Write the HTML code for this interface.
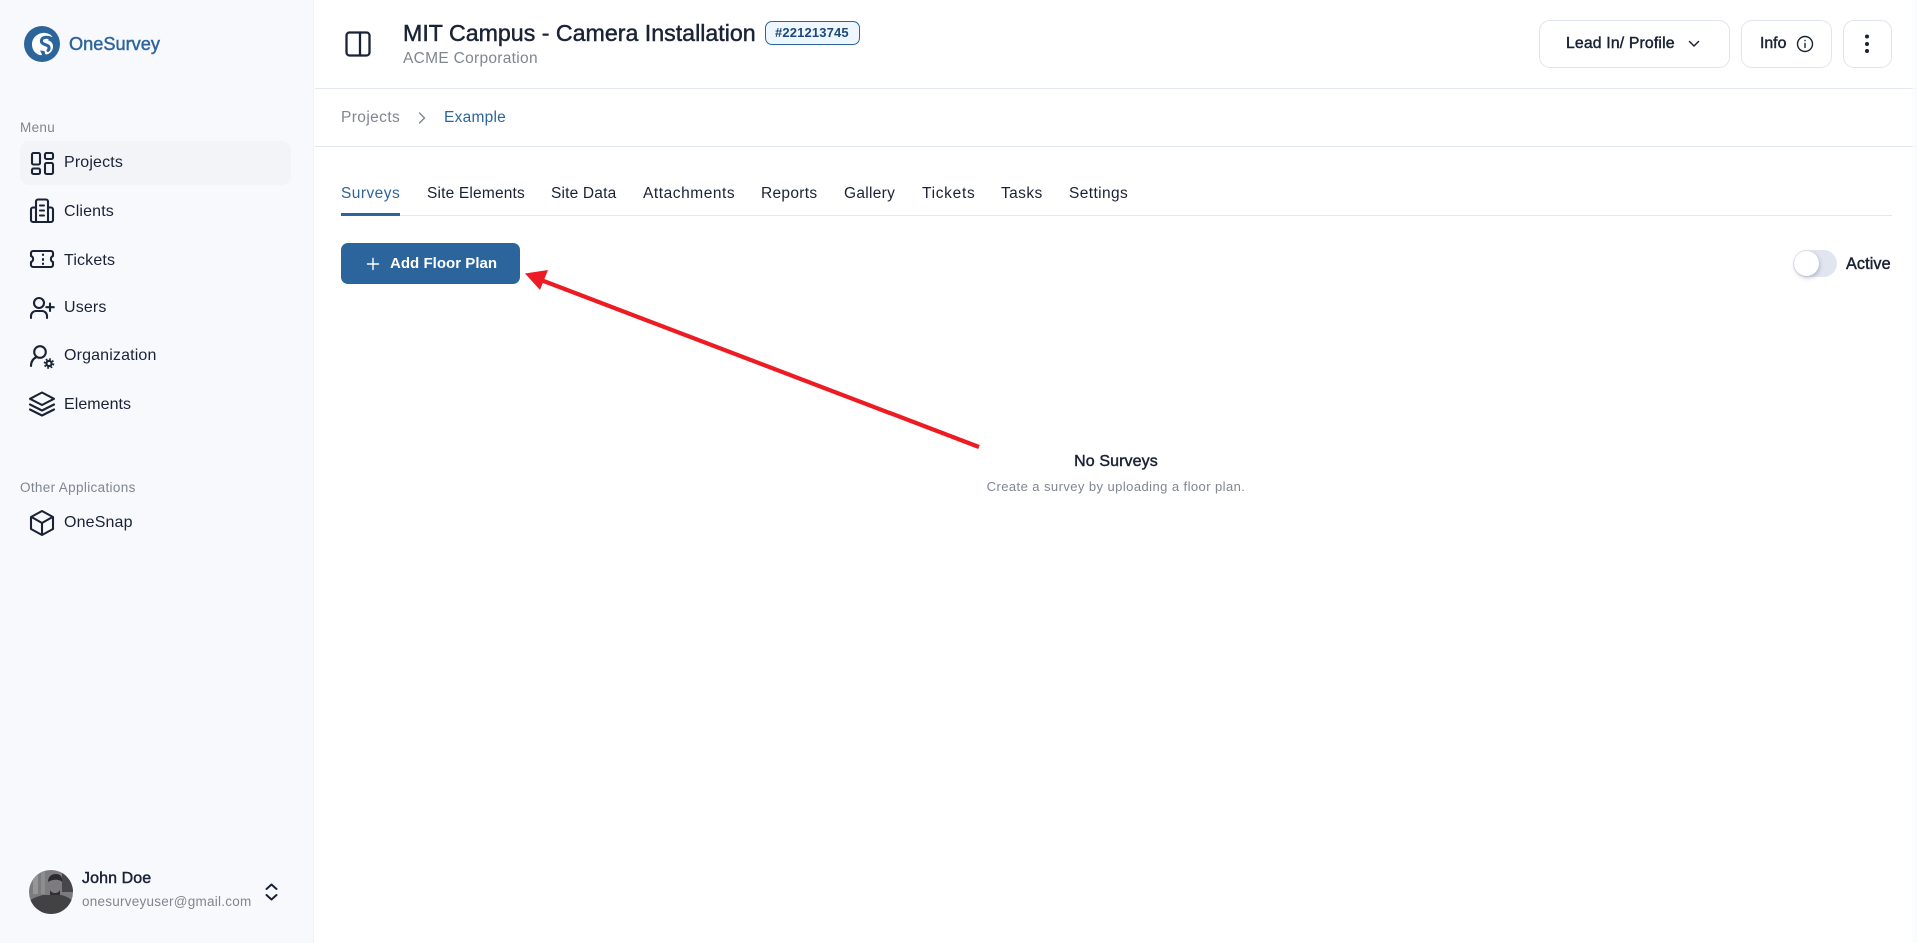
<!DOCTYPE html>
<html lang="en">
<head>
<meta charset="utf-8">
<title>OneSurvey - MIT Campus</title>
<style>
*{box-sizing:border-box;margin:0;padding:0}
html,body{width:1917px;height:943px;overflow:hidden;background:#fff;font-family:"Liberation Sans",sans-serif;color:#1a2236}
.t{position:absolute;white-space:nowrap;line-height:20px;height:20px}
.side{position:absolute;left:0;top:0;width:314px;height:943px;background:#f8f9fd;border-right:1px solid #f0f2f7}
.active{position:absolute;left:20px;top:141px;width:271px;height:44px;border-radius:9px;background:#f3f4f8}
.nav{font-size:16px;letter-spacing:.15px;left:64px}
.label{font-size:13.5px;color:#7f8690;left:20px;letter-spacing:.34px}
.med{-webkit-text-stroke:.45px currentColor}
.line{position:absolute;background:#e3e7ef;height:1px}
.btn{position:absolute;top:20px;height:48px;border:1px solid #dfe4f0;border-radius:11px;background:#fff}
.tab{font-size:15.5px;top:184px;letter-spacing:.18px;color:#1a2236}
svg{position:absolute;overflow:visible}
</style>
</head>
<body>
<aside class="side"></aside>
<div class="active"></div>

<svg style="left:0;top:0" width="314" height="943" viewBox="0 0 314 943" fill="none" stroke="#1a2236" stroke-width="2.1" stroke-linecap="round" stroke-linejoin="round">
  <circle cx="42" cy="44" r="18" fill="#2c659c" stroke="none"/>
  <path d="M47 33.2C39 31.5 32 37 32 44.5c0 6 4 10 9 10.8l3-1.6 3 .8c3-1 5.5-3.5 6-7 .5-4-2-6.500-5.500-7.500l5-3C51.500 35 49.500 33.800 47 33.200Z" fill="#fff" stroke="none"/>
  <path d="M52 38.500C47 36.500 42.500 37 41.500 40c-1 3.500 3.500 4.500 6 5.500 2 1 2 3.500 .5 5" stroke="#2c659c" stroke-width="3"/>
  <path d="M40 50.500l2.500 5h3l-1-4.500z" fill="#2c659c" stroke="none"/>

  <rect x="32" y="153" width="8" height="11.500" rx="1.500"/><rect x="45" y="153" width="8" height="6" rx="1.500"/><rect x="45" y="163" width="8" height="11" rx="1.500"/><rect x="32" y="168.500" width="8" height="5.500" rx="1.500"/>

  <path d="M36 222V201.500a2 2 0 0 1 2-2h8a2 2 0 0 1 2 2v20.500M36 207.500h-3a2 2 0 0 0-2 2v10.500a2 2 0 0 0 2 2h18a2 2 0 0 0 2-2v-10.500a2 2 0 0 0-2-2h-3M40 205.500h4M40 210.500h4M40 215.500h4"/>

  <path d="M33 251h18a2 2 0 0 1 2 2v3a3.200 3.200 0 0 0 0 6v3a2 2 0 0 1-2 2H33a2 2 0 0 1-2-2v-3a3.200 3.200 0 0 0 0-6v-3a2 2 0 0 1 2-2ZM43 254.500v.5M43 259v1M43 263.500v.5"/>

  <circle cx="39" cy="303" r="5"/><path d="M31 318v-2a5 5 0 0 1 5-5h6a5 5 0 0 1 5 5v2M50 303.500v7.500M46.300 307.200h7.500"/>

  <circle cx="40" cy="352" r="5.800"/><path d="M31 366c0-4.500 2.500-7.500 5.500-9"/>
  <circle cx="49" cy="363.500" r="2.600" stroke-width="2.200"/><circle cx="49" cy="363.500" r="4.500" stroke-width="1.600" stroke-dasharray="1.800 1.730" stroke-linecap="butt"/>

  <path d="M42 392.500l12 6.300-12 6.200-12-6.200zM30 404.500l12 6 12-6M30 409.500l12 6 12-6"/>

  <path d="M42 511l11 6v12l-11 6-11-6v-12zM31.500 517l10.500 6 10.500-6M42 523v12"/>

  <path d="M266.500 889l5-4.500 5 4.500M266.500 895l5 4.500 5-4.500" stroke-width="2"/>

  <clipPath id="av"><circle cx="51" cy="892" r="22"/></clipPath>
  <g clip-path="url(#av)" stroke="none">
    <rect x="29" y="870" width="44" height="44" fill="#7c7c7e"/>
    <rect x="62" y="870" width="11" height="22" fill="#47474b"/>
    <rect x="33" y="872" width="5" height="22" fill="#969698"/><rect x="41" y="870" width="4" height="24" fill="#8d8d8f"/>
    <path d="M29 914v-13c4-3 10-5 14-6h18c5 1 8 3 12 6v13z" fill="#424245"/>
    <ellipse cx="55" cy="884" rx="7" ry="9" fill="#7d7b80"/>
    <path d="M48 882c0-6 4-8 8-8s7 3 6 8c-2-3-10-3-14 0Z" fill="#2c2c30"/>
    <path d="M50 890c2 4 8 4 10 0v5h-10z" fill="#303034"/>
  </g>
</svg>

<div class="t med" style="left:69px;top:34px;font-size:18.200px;color:#2c659c">OneSurvey</div>

<div class="t label" style="top:118px">Menu</div>
<div class="t nav" style="top:153px">Projects</div>
<div class="t nav" style="top:202px">Clients</div>
<div class="t nav" style="top:251px">Tickets</div>
<div class="t nav" style="top:298px">Users</div>
<div class="t nav" style="top:346px">Organization</div>
<div class="t nav" style="top:395px;letter-spacing:.05px">Elements</div>
<div class="t label" style="top:477.500px">Other Applications</div>
<div class="t nav" style="top:512.500px">OneSnap</div>

<div class="t med" style="left:82px;top:868.500px;font-size:16px;letter-spacing:.1px">John Doe</div>
<div class="t" style="left:82px;top:892px;font-size:13.500px;color:#7f8690;letter-spacing:.25px">onesurveyuser@gmail.com</div>

<div class="line" style="left:315px;top:88px;width:1602px"></div>
<div class="line" style="left:315px;top:146px;width:1602px"></div>
<div style="position:absolute;left:1912px;top:0;width:5px;height:943px;background:linear-gradient(90deg,rgba(248,249,251,.4),#f8f9fb)"></div>

<svg style="left:344px;top:30px" width="28" height="28" viewBox="0 0 28 28" fill="none" stroke="#1a2236" stroke-width="2.300" stroke-linecap="round" stroke-linejoin="round"><rect x="2.500" y="2.500" width="23" height="23" rx="3"/><path d="M16 2.500v23"/></svg>

<div class="t med" style="left:403px;top:23px;font-size:23.200px">MIT Campus - Camera Installation</div>
<div class="t" style="left:403px;top:48.500px;font-size:15.500px;color:#7f8690;letter-spacing:.3px">ACME Corporation</div>
<div style="position:absolute;left:765px;top:21px;width:95px;height:24px;border:1.300px solid #2c659c;border-radius:7px;background:#eef7fd"></div>
<div class="t" style="left:775px;top:23px;font-size:13px;font-weight:700;color:#1d4a7a;letter-spacing:.15px">#221213745</div>

<div class="btn" style="left:1539px;width:191px"></div>
<div class="t med" style="left:1566px;top:33.500px;font-size:15.800px;letter-spacing:.15px">Lead In/ Profile</div>
<svg style="left:1687px;top:38px" width="14" height="12" viewBox="0 0 14 12" fill="none" stroke="#1a2236" stroke-width="1.500" stroke-linecap="round" stroke-linejoin="round"><path d="M2.500 3.500l4.500 4.500 4.500-4.500"/></svg>
<div class="btn" style="left:1741px;width:91px"></div>
<div class="t med" style="left:1760px;top:33.500px;font-size:15.800px">Info</div>
<svg style="left:1796px;top:35px" width="18" height="18" viewBox="0 0 18 18" fill="none" stroke="#1a2236" stroke-width="1.400" stroke-linecap="round"><circle cx="9" cy="9" r="7.500"/><path d="M9 8.500v4M9 5.500v.2"/></svg>
<div class="btn" style="left:1843px;width:49px"></div>
<svg style="left:1860px;top:32px" width="14" height="24" viewBox="0 0 14 24" fill="#1a2236"><circle cx="7" cy="4.500" r="2"/><circle cx="7" cy="12" r="2"/><circle cx="7" cy="19" r="2"/></svg>

<div class="t" style="left:341px;top:108px;font-size:15.500px;color:#7f8690;letter-spacing:.4px">Projects</div>
<svg style="left:416px;top:111px" width="12" height="14" viewBox="0 0 12 14" fill="none" stroke="#7f8690" stroke-width="1.400" stroke-linecap="round" stroke-linejoin="round"><path d="M3.500 2l5 5-5 5"/></svg>
<div class="t" style="left:444px;top:108px;font-size:15.500px;color:#2c659c;letter-spacing:.25px">Example</div>

<div class="t tab" style="left:341px;color:#2c659c;letter-spacing:.45px">Surveys</div>
<div class="t tab" style="left:427px">Site Elements</div>
<div class="t tab" style="left:551px">Site Data</div>
<div class="t tab" style="left:643px;letter-spacing:.55px">Attachments</div>
<div class="t tab" style="left:761px;letter-spacing:.3px">Reports</div>
<div class="t tab" style="left:844px;letter-spacing:.3px">Gallery</div>
<div class="t tab" style="left:922px;letter-spacing:.7px">Tickets</div>
<div class="t tab" style="left:1001px;letter-spacing:.4px">Tasks</div>
<div class="t tab" style="left:1069px;letter-spacing:.4px">Settings</div>
<div class="line" style="left:341px;top:215px;width:1551px"></div>
<div style="position:absolute;left:341px;top:213px;width:59px;height:2.500px;background:#2c659c"></div>

<div style="position:absolute;left:341px;top:243px;width:179px;height:41px;border-radius:7px;background:#2c659c"></div>
<svg style="left:365px;top:256px" width="16" height="16" viewBox="0 0 16 16" fill="none" stroke="#fff" stroke-width="1.400" stroke-linecap="round"><path d="M8 2.500v11M2.500 8h11"/></svg>
<div class="t" style="left:390px;top:253.500px;font-size:15px;font-weight:700;color:#fff;letter-spacing:.03px">Add Floor Plan</div>

<div style="position:absolute;left:1793px;top:250px;width:44px;height:27px;border-radius:14px;background:#e1e5ef"></div>
<div style="position:absolute;left:1794px;top:251px;width:25px;height:25px;border-radius:50%;background:#fff;box-shadow:1px 2px 4px rgba(90,100,130,.35)"></div>
<div class="t med" style="left:1846px;top:253.500px;font-size:16.200px;letter-spacing:.1px">Active</div>

<svg style="left:0;top:0" width="1917" height="943" viewBox="0 0 1917 943" fill="none"><path d="M979 447L541 280" stroke="#ed1c24" stroke-width="4.200"/><path d="M525 273.500L548 270L540 290Z" fill="#ed1c24"/></svg>

<div class="t med" style="left:1016px;top:451.500px;width:200px;text-align:center;font-size:16px;letter-spacing:.1px">No Surveys</div>
<div class="t" style="left:916px;top:477px;width:400px;text-align:center;font-size:13px;color:#7f8690;letter-spacing:.43px">Create a survey by uploading a floor plan.</div>
</body>
</html>
